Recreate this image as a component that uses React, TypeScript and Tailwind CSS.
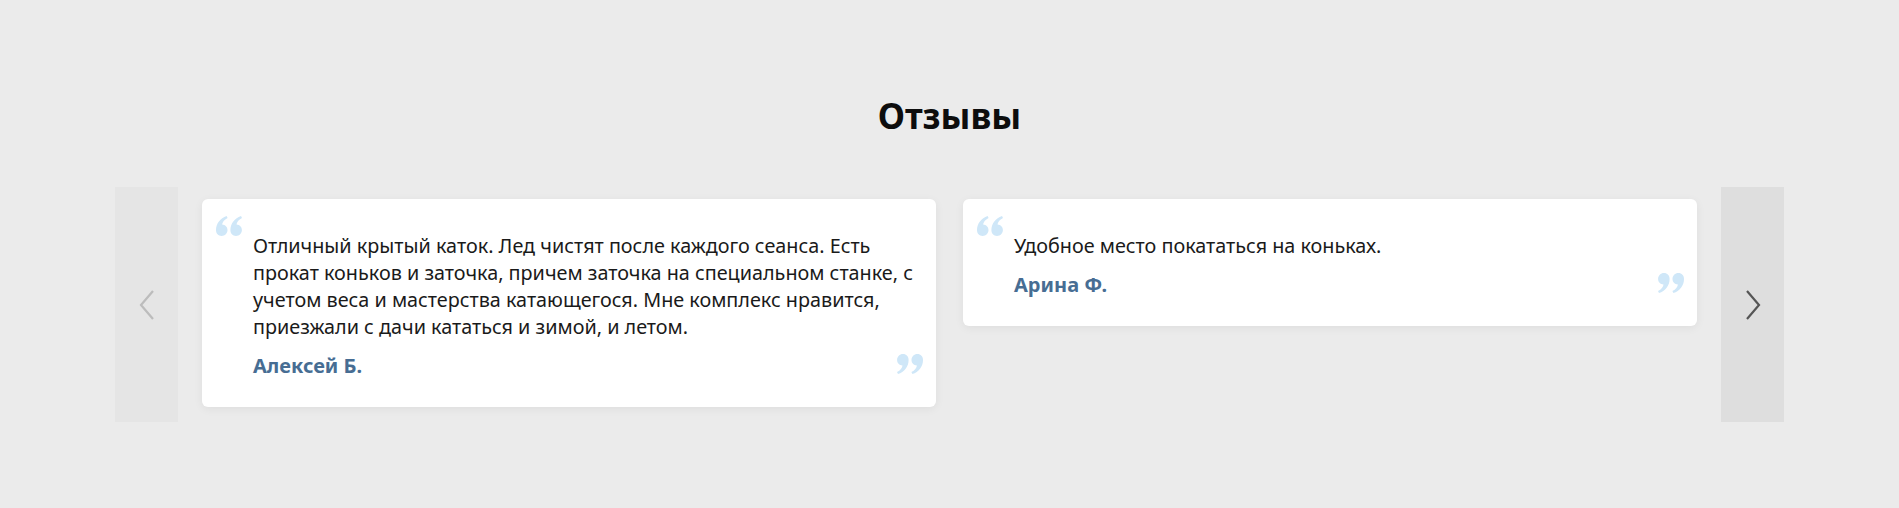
import React from 'react';

const reviews = [
  {
    lines: [
      'Отличный крытый каток. Лед чистят после каждого сеанса. Есть',
      'прокат коньков и заточка, причем заточка на специальном станке, с',
      'учетом веса и мастерства катающегося. Мне комплекс нравится,',
      'приезжали с дачи кататься и зимой, и летом.',
    ],
    author: 'Алексей Б.',
  },
  {
    lines: ['Удобное место покататься на коньках.'],
    author: 'Арина Ф.',
  },
];

const QuoteLeft = ({ className }: { className?: string }) => (
  <svg viewBox="0 0 26 20" className={className} fill="currentColor">
    <path d="M5.6 20C2.3 20 0 17.6 0 14.1 0 7.6 4.3 2.2 10.6 0l1 1.9C8.2 3.6 6.3 6.2 6.1 8.6c3.2.2 5.4 2.4 5.4 5.5 0 3.2-2.5 5.9-5.9 5.9zM20 20c-3.3 0-5.6-2.4-5.6-5.9 0-6.5 4.3-11.9 10.6-14.1l1 1.9c-3.4 1.7-5.3 4.3-5.5 6.7 3.2.2 5.4 2.4 5.4 5.5 0 3.2-2.5 5.9-5.9 5.9z" />
  </svg>
);

const QuoteRight = ({ className }: { className?: string }) => (
  <svg viewBox="0 0 26 20" className={className} fill="currentColor">
    <path
      transform="rotate(180 13 10)"
      d="M5.6 20C2.3 20 0 17.6 0 14.1 0 7.6 4.3 2.2 10.6 0l1 1.9C8.2 3.6 6.3 6.2 6.1 8.6c3.2.2 5.4 2.4 5.4 5.5 0 3.2-2.5 5.9-5.9 5.9zM20 20c-3.3 0-5.6-2.4-5.6-5.9 0-6.5 4.3-11.9 10.6-14.1l1 1.9c-3.4 1.7-5.3 4.3-5.5 6.7 3.2.2 5.4 2.4 5.4 5.5 0 3.2-2.5 5.9-5.9 5.9z"
    />
  </svg>
);

const Chevron = ({ dir, className }: { dir: 'left' | 'right'; className?: string }) => (
  <svg viewBox="0 0 16 30" className={className} fill="none" stroke="currentColor" strokeWidth="2.2">
    {dir === 'left' ? <path d="M14 1 2 15l12 14" /> : <path d="M2 1l12 14L2 29" />}
  </svg>
);

export default function App() {
  return (
    <div className="min-h-[508px] w-full bg-[#ebebeb] pt-[96px] pb-[86px] font-['Noto_Sans','Open_Sans',sans-serif]">
      <h2 className="text-center text-[35px] leading-[40px] font-bold text-[#0d0d0d]">Отзывы</h2>

      {/* Carousel */}
      <div className="mx-auto mt-[51px] flex w-[1669px] items-start">
        <button className="flex h-[235px] w-[63px] shrink-0 items-center justify-center bg-[#e5e5e5] text-[#bcbcbc]">
          <Chevron dir="left" className="h-[30px] w-[16px]" />
        </button>

        <div className="flex flex-1 items-start gap-[27px] px-[24px] pt-[12px]">
          {reviews.map((r) => (
            <div
              key={r.author}
              className="relative w-[734px] rounded-[6px] bg-white pt-[33px] pr-[12px] pb-[28px] pl-[51px] shadow-[0_2px_10px_rgba(0,0,0,0.06)]"
            >
              <QuoteLeft className="absolute top-[17px] left-[14px] h-[20px] w-[26px] text-[#cfe7f8]" />
              <p className="text-[19.8px] leading-[27px] whitespace-nowrap text-[#1a1a1a]">
                {r.lines.map((l, i) => (
                  <React.Fragment key={i}>
                    {l}
                    {i < r.lines.length - 1 && <br />}
                  </React.Fragment>
                ))}
              </p>
              <p className="mt-[12px] text-[20px] leading-[27px] font-bold text-[#476d93]">{r.author}</p>
              <QuoteRight className="absolute right-[13px] bottom-[33px] h-[20px] w-[26px] text-[#cfe7f8]" />
            </div>
          ))}
        </div>

        <button className="flex h-[235px] w-[63px] shrink-0 items-center justify-center bg-[#dedede] text-[#555]">
          <Chevron dir="right" className="h-[30px] w-[16px]" />
        </button>
      </div>
    </div>
  );
}
